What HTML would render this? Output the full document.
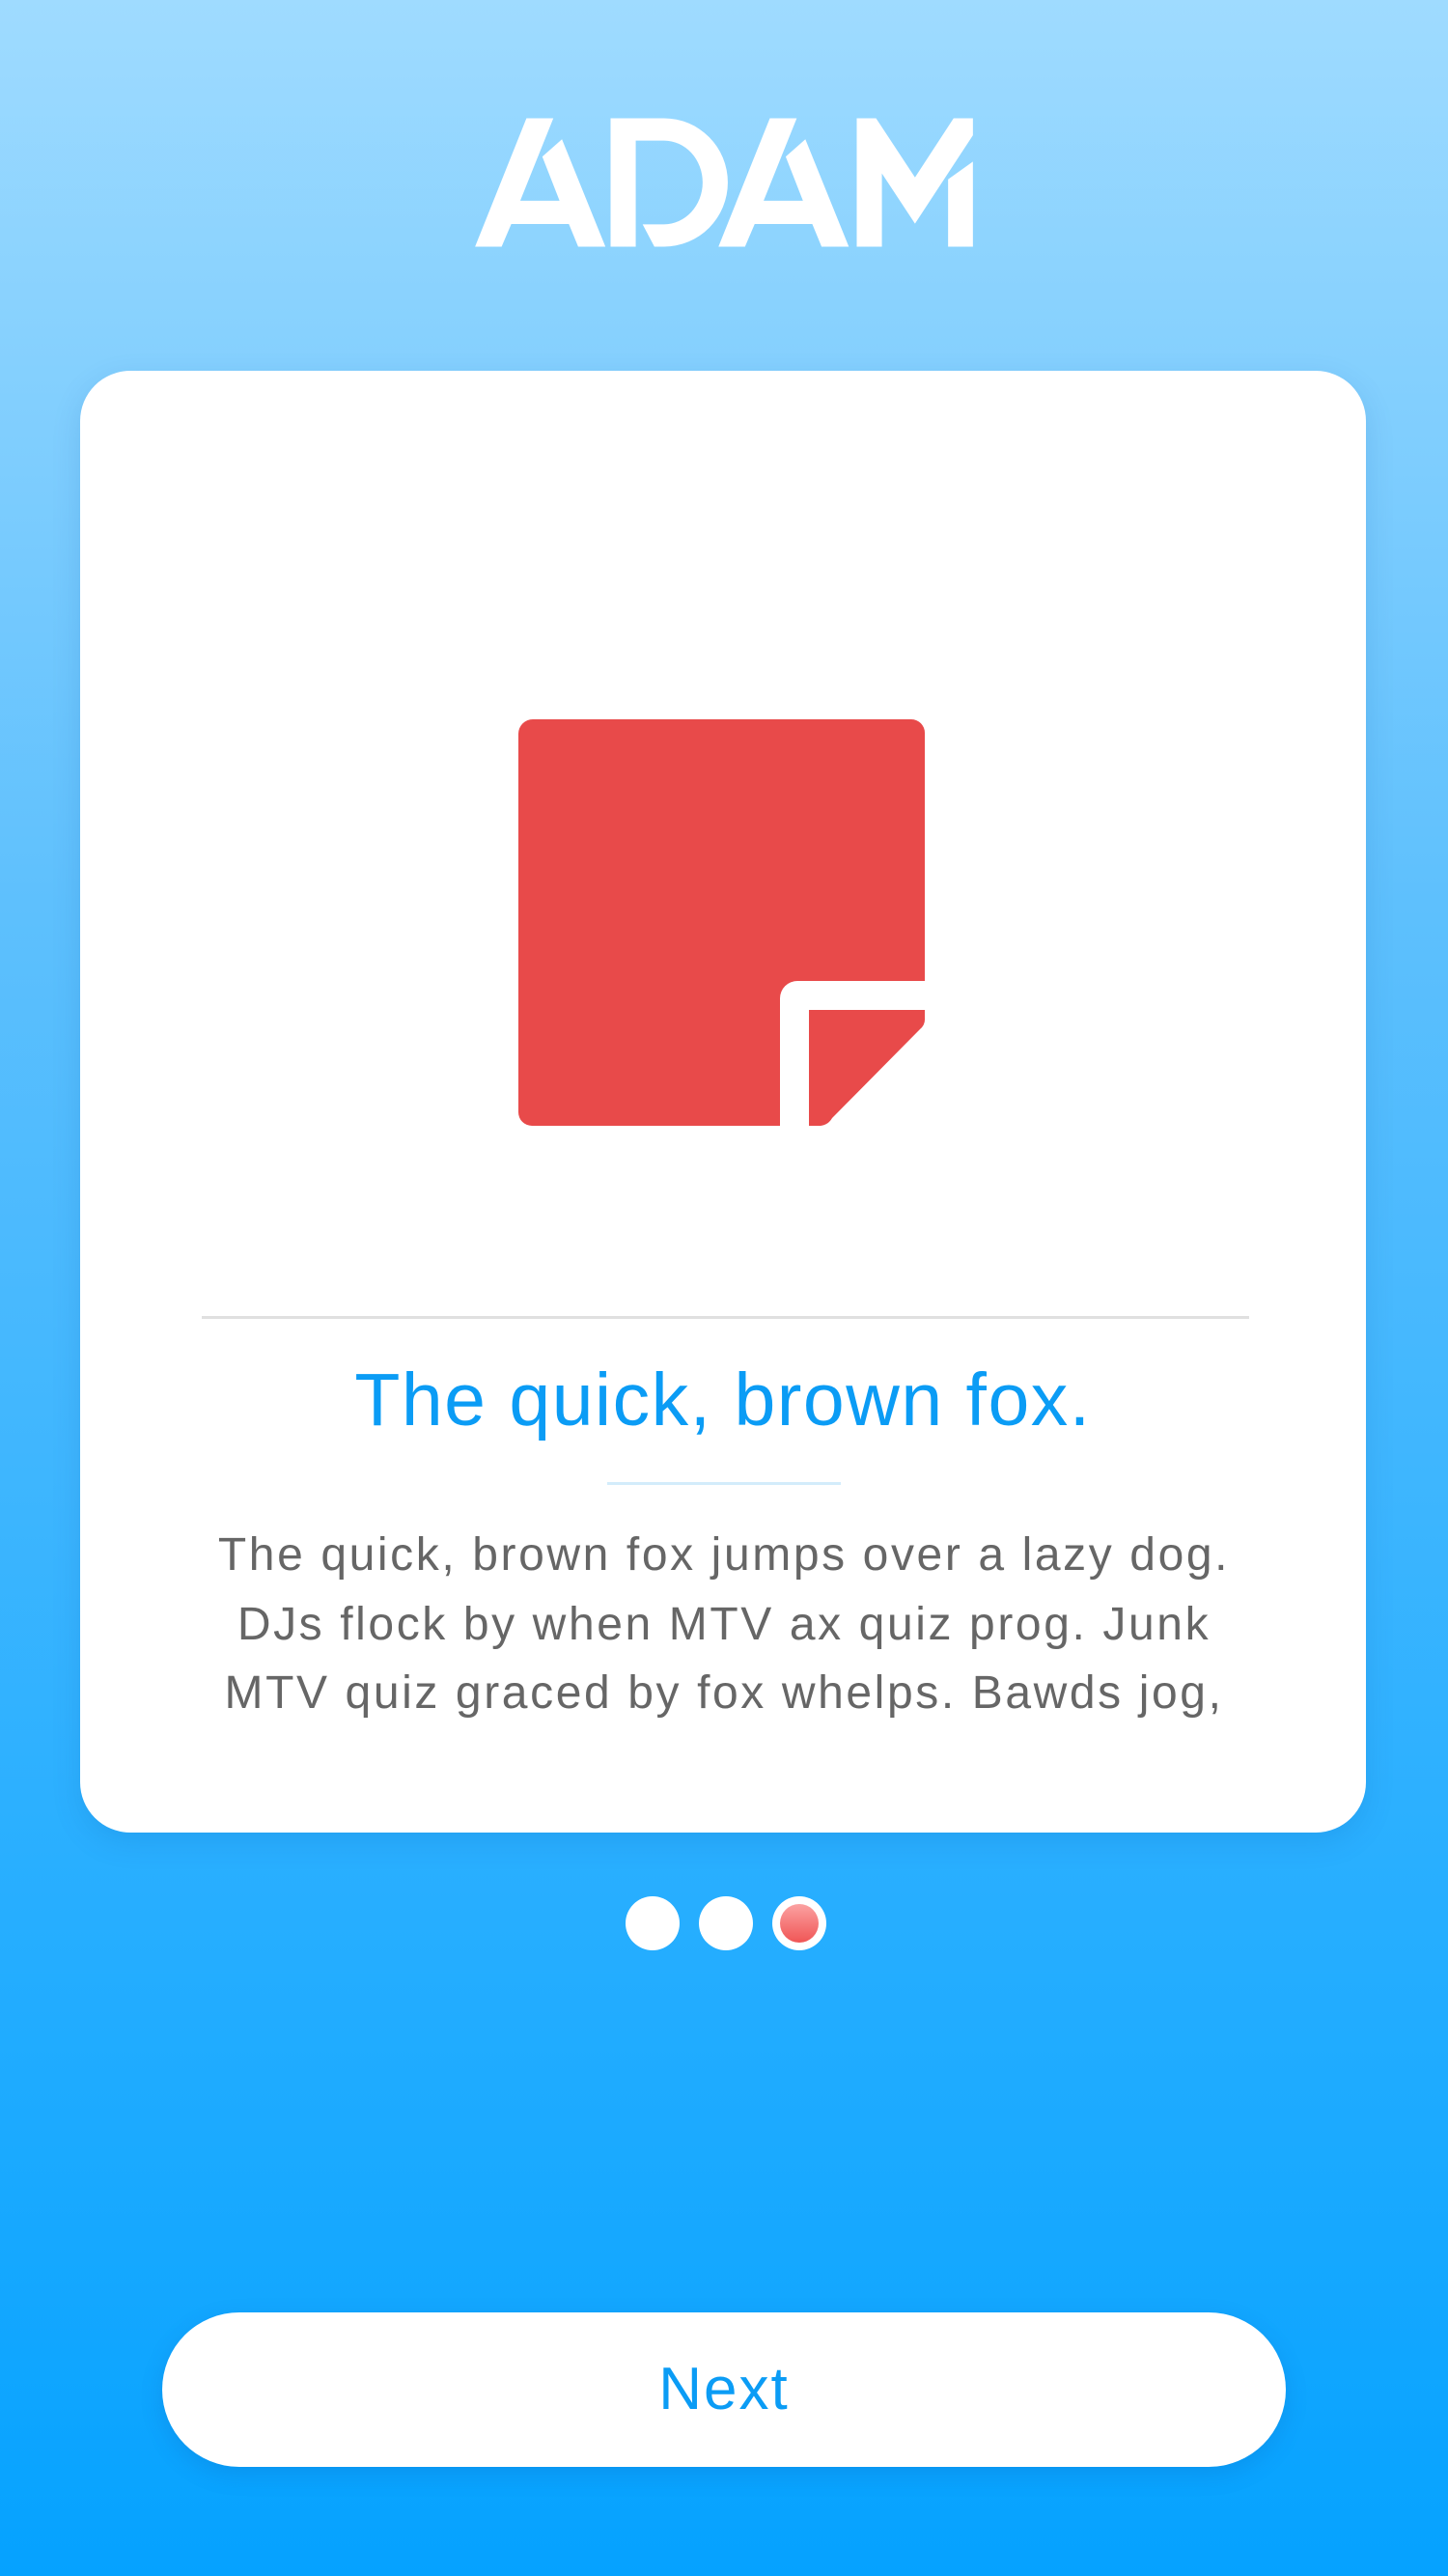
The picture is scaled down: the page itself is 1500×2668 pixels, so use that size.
<!DOCTYPE html>
<html><head><meta charset="utf-8"><style>
html,body{margin:0;padding:0}
body{width:1500px;height:2668px;position:relative;overflow:hidden;background:linear-gradient(180deg,#9fdbff 0%,#5ec0fd 35%,#2cb0ff 70%,#05a2ff 100%);font-family:"Liberation Sans",sans-serif}
.card{position:absolute;left:83px;top:384px;width:1332px;height:1514px;background:#fff;border-radius:52px;box-shadow:0 10px 30px rgba(0,80,160,.15)}
.div1{position:absolute;left:209px;top:1363px;width:1085px;height:3px;background:#e0e0e0}
.title{position:absolute;left:83px;width:1332px;top:1405px;text-align:center;color:#0b9cf5;font-size:77px;letter-spacing:1.5px;line-height:90px}
.div2{position:absolute;left:629px;top:1535px;width:242px;height:3px;background:#d3ecfb}
.body{position:absolute;left:100px;width:1300px;top:1575px;text-align:center;color:#666;font-size:48px;letter-spacing:2.6px;line-height:71.5px}
.dot{position:absolute;width:56px;height:56px;border-radius:50%;background:#fff;top:1964px}
.red{position:absolute;left:808px;top:1972px;width:40px;height:40px;border-radius:50%;background:linear-gradient(#fba2a2,#f05555)}
.btn{position:absolute;left:168px;top:2395px;width:1164px;height:160px;border-radius:80px;background:#fff;color:#0b9cf5;font-size:62px;letter-spacing:2px;text-align:center;line-height:160px;box-shadow:0 8px 24px rgba(0,60,140,.15)}
</style></head><body>
<svg style="position:absolute;left:470px;top:97.5px" width="560" height="171.4" viewBox="0 0 1568 504" preserveAspectRatio="none">
<g fill="#fff">
<path d="M62 463L211 72H289L193 323H307L257 189L314 136L440 463H361L334 394H167L139 463Z"/>
<path d="M455 72H610A185 195.5 0 0 1 610 463H582L548 395H610A112 127.5 0 0 0 610 140H528V463H455Z"/>
<path transform="translate(706 0)" d="M62 463L211 72H289L193 323H307L257 189L314 136L440 463H361L334 394H167L139 463Z"/>
<path d="M1169 72H1225L1338 252L1450 72H1506V124L1338 393L1242 240V463H1169Z"/>
<path d="M1434 258L1506 204V463H1434Z"/>
</g></svg>
<div class="card"></div>
<svg style="position:absolute;left:0;top:0" width="1500" height="1300">
<path fill="#e84a4a" d="M552 745H944A14 14 0 0 1 958 759V1016H826A18 18 0 0 0 808 1034V1166H551A14 14 0 0 1 537 1152V760A15 15 0 0 1 552 745Z"/>
<path fill="#e84a4a" d="M838 1046H958V1054A14 14 0 0 1 953 1066L862 1158A16 16 0 0 1 850 1166H838Z"/>
</svg>
<div class="div1"></div>
<div class="title">The quick, brown fox.</div>
<div class="div2"></div>
<div class="body">The quick, brown fox jumps over a lazy dog.<br>DJs flock by when MTV ax quiz prog. Junk<br>MTV quiz graced by fox whelps. Bawds jog,</div>
<div class="dot" style="left:648px"></div>
<div class="dot" style="left:724px"></div>
<div class="dot" style="left:800px"></div>
<div class="red"></div>
<div class="btn">Next</div>
</body></html>
